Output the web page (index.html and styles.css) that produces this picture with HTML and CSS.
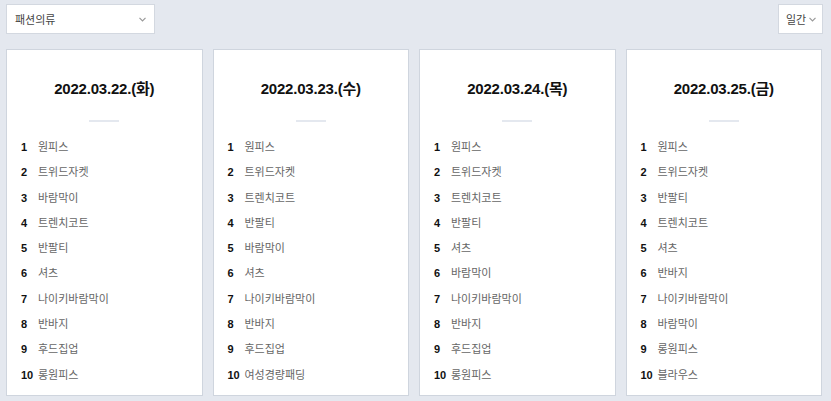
FILE: index.html
```html
<!DOCTYPE html>
<html lang="ko">
<head>
  <meta charset="UTF-8" />
  <title>일간 인기 검색어</title>
  <link rel="stylesheet" href="styles.css">
</head>
<body>

<div class="toolbar">
  <div class="select">
    <span>패션의류</span>
    <svg class="chev" width="7" height="5" viewBox="0 0 7 5"><path d="M0.5 0.8 L3.5 3.8 L6.5 0.8" fill="none" stroke="#999" stroke-width="1.2"/></svg>
  </div>
  <div class="select period">
    <span>일간</span>
    <svg class="chev" width="7" height="5" viewBox="0 0 7 5"><path d="M0.5 0.8 L3.5 3.8 L6.5 0.8" fill="none" stroke="#999" stroke-width="1.2"/></svg>
  </div>
</div>

<div class="cards">
  <div class="card">
    <h2>2022.03.22.(화)</h2>
    <div class="divider"></div>
    <ol class="rank">
      <li><b>1</b>원피스</li>
      <li><b>2</b>트위드자켓</li>
      <li><b>3</b>바람막이</li>
      <li><b>4</b>트렌치코트</li>
      <li><b>5</b>반팔티</li>
      <li><b>6</b>셔츠</li>
      <li><b>7</b>나이키바람막이</li>
      <li><b>8</b>반바지</li>
      <li><b>9</b>후드집업</li>
      <li><b>10</b>롱원피스</li>
    </ol>
  </div>
  <div class="card">
    <h2>2022.03.23.(수)</h2>
    <div class="divider"></div>
    <ol class="rank">
      <li><b>1</b>원피스</li>
      <li><b>2</b>트위드자켓</li>
      <li><b>3</b>트렌치코트</li>
      <li><b>4</b>반팔티</li>
      <li><b>5</b>바람막이</li>
      <li><b>6</b>셔츠</li>
      <li><b>7</b>나이키바람막이</li>
      <li><b>8</b>반바지</li>
      <li><b>9</b>후드집업</li>
      <li><b>10</b>여성경량패딩</li>
    </ol>
  </div>
  <div class="card">
    <h2>2022.03.24.(목)</h2>
    <div class="divider"></div>
    <ol class="rank">
      <li><b>1</b>원피스</li>
      <li><b>2</b>트위드자켓</li>
      <li><b>3</b>트렌치코트</li>
      <li><b>4</b>반팔티</li>
      <li><b>5</b>셔츠</li>
      <li><b>6</b>바람막이</li>
      <li><b>7</b>나이키바람막이</li>
      <li><b>8</b>반바지</li>
      <li><b>9</b>후드집업</li>
      <li><b>10</b>롱원피스</li>
    </ol>
  </div>
  <div class="card">
    <h2>2022.03.25.(금)</h2>
    <div class="divider"></div>
    <ol class="rank">
      <li><b>1</b>원피스</li>
      <li><b>2</b>트위드자켓</li>
      <li><b>3</b>반팔티</li>
      <li><b>4</b>트렌치코트</li>
      <li><b>5</b>셔츠</li>
      <li><b>6</b>반바지</li>
      <li><b>7</b>나이키바람막이</li>
      <li><b>8</b>바람막이</li>
      <li><b>9</b>롱원피스</li>
      <li><b>10</b>블라우스</li>
    </ol>
  </div>
</div>

</body>
</html>
```

FILE: styles.css
```css
body {
  margin: 0;
  background: #e4e8ef;
  font-family: 'Liberation Sans', 'Noto Sans CJK KR', sans-serif;
  color: #222;
}

.toolbar {
  display: flex;
  justify-content: space-between;
  padding: 4px 8px 0 6px;
}

.select {
  display: flex;
  align-items: center;
  justify-content: space-between;
  box-sizing: border-box;
  width: 149px;
  height: 30px;
  padding: 0 8px 0 8px;
  background: #fff;
  border: 1px solid #d3d8e0;
  font-size: 11px;
  color: #444;
}

.select.period {
  width: 45px;
  padding: 0 6px 0 7px;
}

.chev {
  display: block;
}

.cards {
  display: grid;
  grid-template-columns: repeat(4, 1fr);
  gap: 10px;
  padding: 15px 9px 0 6px;
}

.card {
  background: #fff;
  border: 1px solid #cfd5de;
  padding: 29px 14px 7px;
}

.card h2 {
  margin: 0;
  font-size: 15px;
  line-height: 20px;
  letter-spacing: -0.2px;
  text-align: center;
  color: #111;
}

.divider {
  width: 30px;
  height: 2px;
  margin: 21px auto 0;
  background: #e4e8ef;
}

.rank {
  list-style: none;
  margin: 13px 0 0;
  padding: 0;
}

.rank li {
  display: flex;
  line-height: 25.3px;
  font-size: 11px;
  color: #666;
}

.rank b {
  width: 17px;
  flex-shrink: 0;
  color: #111;
}
```
